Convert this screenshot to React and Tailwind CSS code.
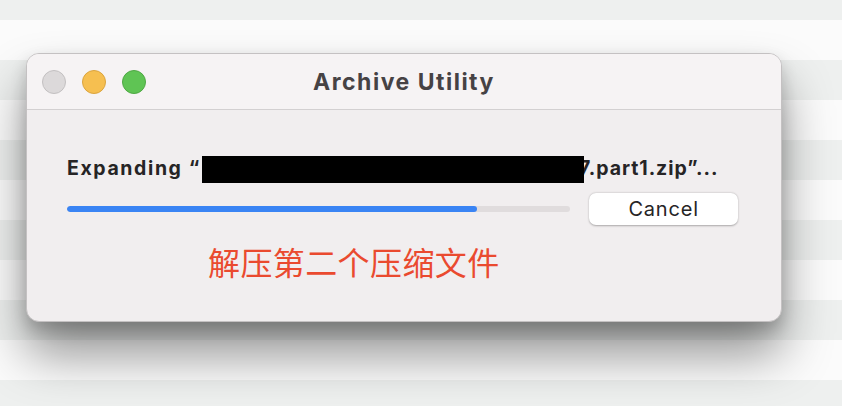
export default function App() {
  return (
    <div
      className="w-[842px] h-[406px] overflow-hidden pt-[53px] pl-[26px] bg-[repeating-linear-gradient(180deg,#eef0ef_0px,#eef0ef_20px,#fbfbfb_20px,#fbfbfb_60px,#eef0ef_60px,#eef0ef_80px)]"
      style={{ fontFamily: 'Inter, "Noto Sans CJK SC", sans-serif' }}
    >
      <div className="w-[756px] h-[269px] rounded-[13px] bg-[#f1eeef] border border-[#c4c1c2] shadow-[0_32px_50px_rgba(0,0,0,0.42),0_8px_16px_rgba(0,0,0,0.18)] overflow-hidden flex flex-col">
        <div className="h-[56px] shrink-0 bg-[#f6f3f4] border-b border-[#d3d0d1] grid grid-cols-[1fr_auto_1fr] items-center px-[15px]">
          <div className="flex items-center gap-[16px]">
            <span className="w-[24px] h-[24px] rounded-full bg-[#dcd9da] border border-[#c3c0c1]" />
            <span className="w-[24px] h-[24px] rounded-full bg-[#f6bf50] border border-[#dba43e]" />
            <span className="w-[24px] h-[24px] rounded-full bg-[#5fc454] border border-[#4fa844]" />
          </div>
          <div className="text-[23px] font-bold text-[#464244] tracking-[1.5px] leading-none pt-[1px]">
            Archive Utility
          </div>
          <div />
        </div>
        <div className="flex-1 flex flex-col pl-[40px] pr-[43px] pt-[45px]">
          <div className="flex items-center h-[28px] text-[19.5px] font-bold text-[#262425] leading-none">
            <span className="tracking-[1.6px]">Expanding “</span>
            <span className="relative z-10 ml-[1px] w-[382px] h-[27px] bg-black shrink-0" />
            <span className="-ml-[5px] tracking-[0.95px]">7.part1.zip”...</span>
          </div>
          <div className="flex items-center mt-[10px] h-[32px]">
            <div className="w-[504px] h-[6px] rounded-full bg-[#e0dcdd] overflow-hidden">
              <div className="h-full rounded-full bg-[#3a84f4]" style={{ width: '81.5%' }} />
            </div>
            <button className="ml-[19px] w-[149px] h-[32px] rounded-[7px] bg-white shadow-[0_0.5px_2px_rgba(0,0,0,0.3)] text-[20px] tracking-[0.8px] text-[#262425] leading-none flex items-center justify-center">
              Cancel
            </button>
          </div>
          <div className="mt-[20px] pl-[141px] text-[32px] leading-none tracking-[0.4px] text-[#ea4a2f]" style={{ fontFamily: '"Noto Sans CJK SC", sans-serif' }}>
            解压第二个压缩文件
          </div>
        </div>
      </div>
    </div>
  );
}
